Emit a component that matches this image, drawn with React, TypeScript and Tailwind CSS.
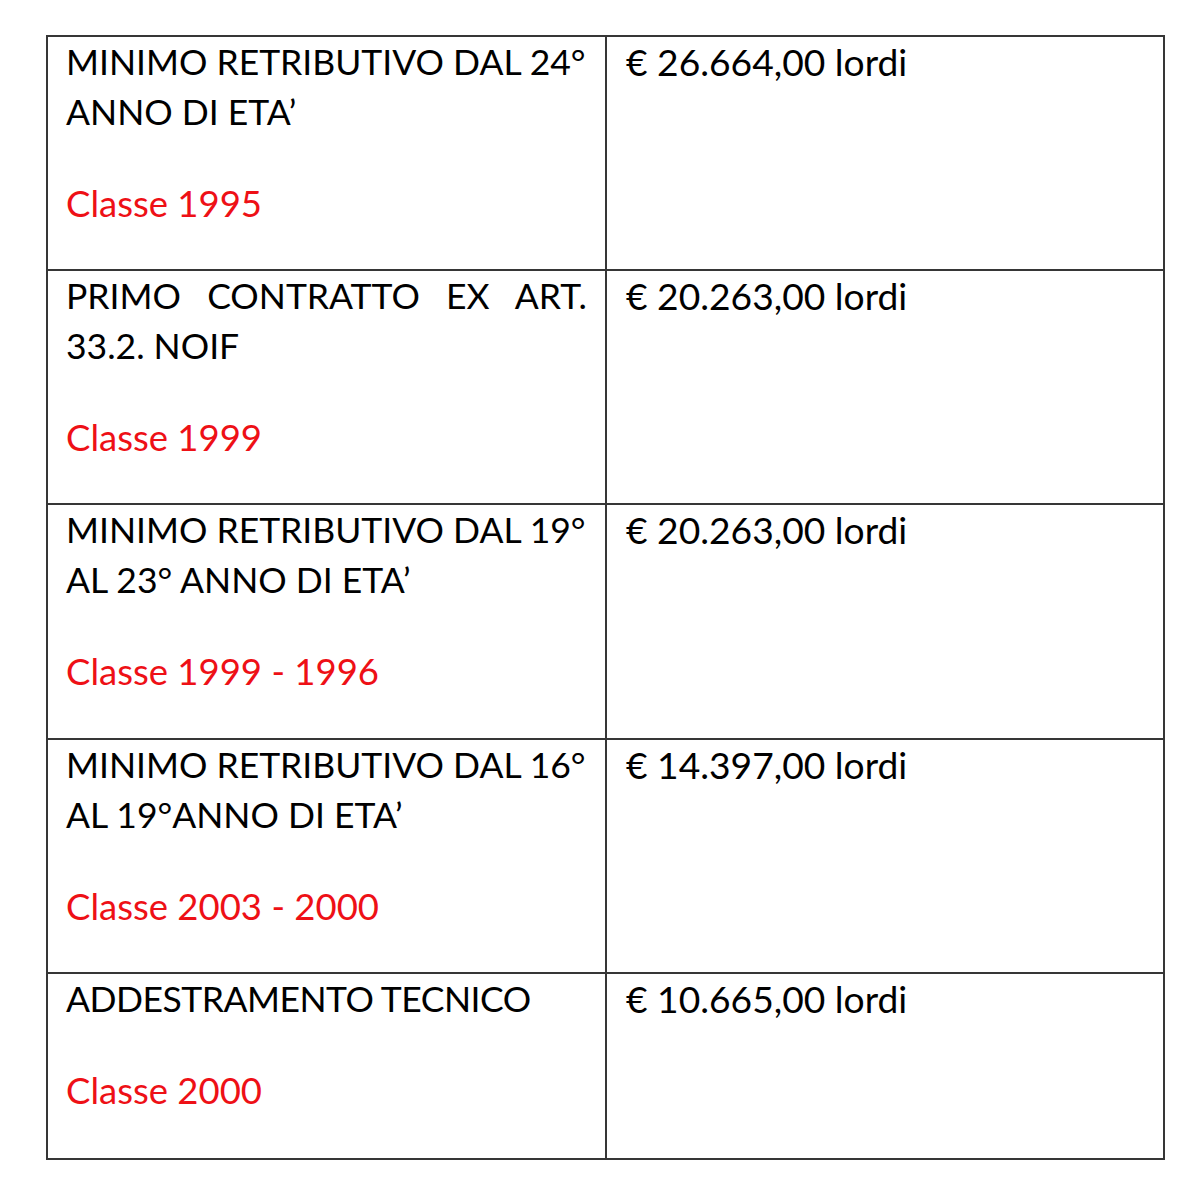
import React from 'react'

const rows = [
  { lines: ['MINIMO RETRIBUTIVO DAL 24°', 'ANNO DI ETA’'], classe: 'Classe 1995', amount: '€ 26.664,00 lordi', h: 'h-[234px]' },
  { lines: ['PRIMO CONTRATTO EX ART.', '33.2. NOIF'], classe: 'Classe 1999', amount: '€ 20.263,00 lordi', h: 'h-[234px]', justify: true },
  { lines: ['MINIMO RETRIBUTIVO DAL 19°', 'AL 23° ANNO DI ETA’'], classe: 'Classe 1999 - 1996', amount: '€ 20.263,00 lordi', h: 'h-[235px]' },
  { lines: ['MINIMO RETRIBUTIVO DAL 16°', 'AL 19°ANNO DI ETA’'], classe: 'Classe 2003 - 2000', amount: '€ 14.397,00 lordi', h: 'h-[234px]' },
  { lines: ['ADDESTRAMENTO TECNICO'], classe: 'Classe 2000', amount: '€ 10.665,00 lordi', h: 'h-[186px]', tight: true },
]

export default function App() {
  return (
    <div className="min-h-[1190px] bg-white pt-[35px] pl-[46px] font-['Lato',sans-serif] leading-[50px] text-black">
      <table className="w-[1119px] table-fixed border-collapse border-2 border-[#363636]">
        <tbody>
          {rows.map((r) => (
            <tr key={r.classe + r.amount} className={r.h}>
              <td className="w-[559px] border-2 border-[#363636] px-[18px] align-top text-[35.5px]">
                {r.lines.map((l, i) => (
                  <div
                    key={l}
                    className={
                      r.justify && i === 0
                        ? 'whitespace-nowrap text-justify [text-align-last:justify]'
                        : r.tight
                          ? 'whitespace-nowrap tracking-[-0.5px]'
                          : 'whitespace-nowrap'
                    }
                  >
                    {l}
                  </div>
                ))}
                <div className="mt-[41px] text-[36.5px] text-[#ee1016]">{r.classe}</div>
              </td>
              <td className="border-2 border-[#363636] px-[19px] align-top text-[37.2px]">{r.amount}</td>
            </tr>
          ))}
        </tbody>
      </table>
    </div>
  )
}
